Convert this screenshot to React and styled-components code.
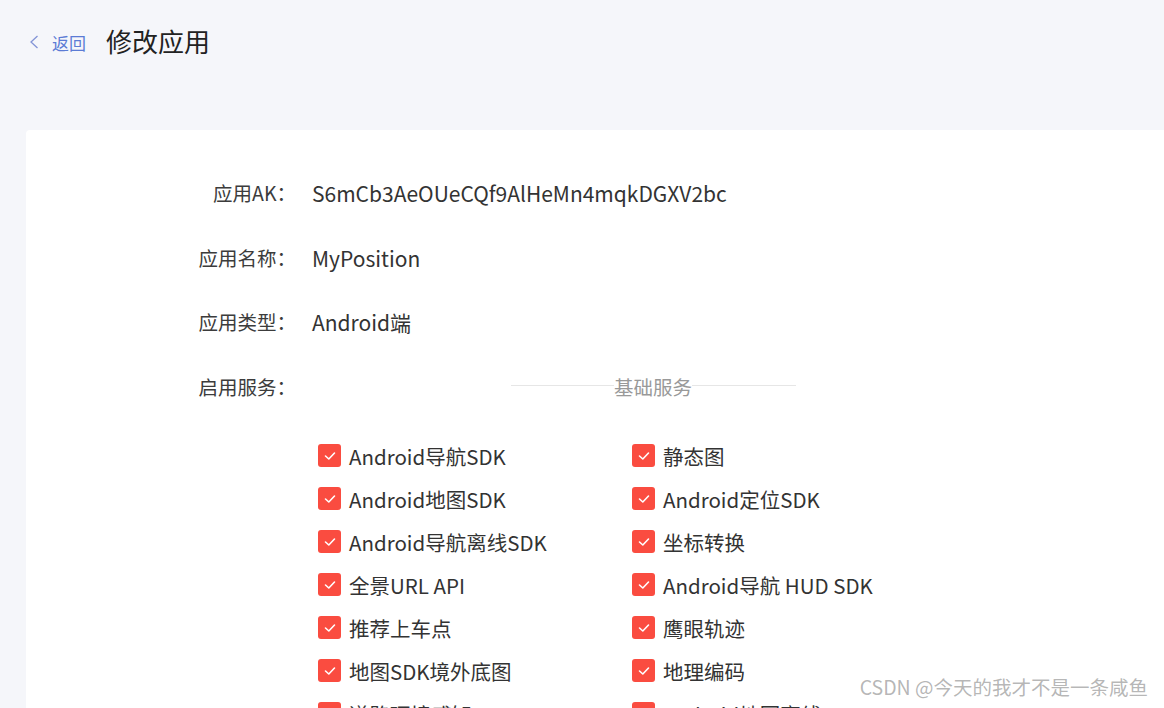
import React from 'react';
import styled, { createGlobalStyle } from 'styled-components';

const GlobalStyle = createGlobalStyle`
  html, body {
    margin: 0;
    padding: 0;
    background: #f5f6fa;
    font-family: "Noto Sans CJK SC", "Noto Sans", sans-serif;
    color: #333;
  }
`;

const Page = styled.div`
  position: relative;
  height: 708px;
  overflow: hidden;
`;

const Header = styled.div`
  display: flex;
  align-items: center;
  height: 84px;
  padding-left: 29px;
`;

const Back = styled.a`
  display: flex;
  align-items: center;
  gap: 13px;
  color: #5b7bd5;
  font-size: 17px;
  cursor: pointer;
  margin-right: 20px;
`;

const Title = styled.h1`
  margin: 0 0 3px;
  font-size: 26px;
  font-weight: 400;
  color: #222;
`;

const Card = styled.div`
  background: #fff;
  margin: 46px 0 0 26px;
  padding-top: 31px;
  min-height: 600px;
  border-radius: 4px 0 0 0;
`;

const FormRow = styled.div`
  display: grid;
  grid-template-columns: 270px 1fr;
  column-gap: 16px;
  align-items: start;
`;

const Label = styled.div`
  text-align: right;
  font-size: 19.5px;
  line-height: 64.5px;
  color: #3c3c3c;
`;

const Value = styled.div`
  font-size: 21px;
  line-height: 64.5px;
  color: #333;
`;

const DividerWrap = styled.div`
  width: 682px;
  height: 64.5px;
  display: flex;
  align-items: center;
  justify-content: center;
`;

const Divider = styled.div`
  width: 285px;
  display: flex;
  align-items: center;
  color: #999;
  font-size: 19.5px;

  &::before,
  &::after {
    content: '';
    flex: 1;
    border-top: 1px solid #e6e6e6;
    margin-top: -2px;
  }
`;

const CheckGrid = styled.div`
  display: grid;
  grid-template-columns: 314px 314px;
  margin: 15px 0 0 6px;
`;

const CheckItem = styled.label`
  display: flex;
  align-items: center;
  gap: 8px;
  height: 43px;
  font-size: 20.5px;
  color: #333;
  white-space: nowrap;
`;

const Box = styled.span`
  width: 23px;
  height: 23px;
  border-radius: 3px;
  background: ${(p) => (p.checked ? '#fa4c40' : '#fff')};
  border: ${(p) => (p.checked ? 'none' : '1px solid #ccc')};
  display: flex;
  align-items: center;
  justify-content: center;
  flex: none;
`;

const Watermark = styled.div`
  position: absolute;
  right: 16px;
  bottom: 7px;
  font-size: 19.5px;
  color: rgba(120, 120, 120, 0.55);
  pointer-events: none;
`;

const services = [
  'Android导航SDK',
  '静态图',
  'Android地图SDK',
  'Android定位SDK',
  'Android导航离线SDK',
  '坐标转换',
  '全景URL API',
  'Android导航 HUD SDK',
  '推荐上车点',
  '鹰眼轨迹',
  '地图SDK境外底图',
  '地理编码',
  '道路环境感知',
  'Android地图离线SDK',
];

function Checkbox({ checked, children }) {
  return (
    <CheckItem>
      <Box checked={checked}>
        {checked && (
          <svg width="12" height="10" viewBox="0 0 12 10">
            <polyline
              points="1.5,5 4.8,8 10.5,2"
              fill="none"
              stroke="#fff"
              strokeWidth="1.6"
              strokeLinecap="round"
              strokeLinejoin="round"
            />
          </svg>
        )}
      </Box>
      {children}
    </CheckItem>
  );
}

export default function App() {
  return (
    <Page>
      <GlobalStyle />
      <Header>
        <Back>
          <svg width="10" height="14" viewBox="0 0 10 14">
            <polyline
              points="8.5,1 2,7 8.5,13"
              fill="none"
              stroke="#8394d6"
              strokeWidth="1.3"
            />
          </svg>
          返回
        </Back>
        <Title>修改应用</Title>
      </Header>
      <Card>
        <FormRow>
          <Label>应用AK：</Label>
          <Value>S6mCb3AeOUeCQf9AlHeMn4mqkDGXV2bc</Value>
        </FormRow>
        <FormRow>
          <Label>应用名称：</Label>
          <Value>MyPosition</Value>
        </FormRow>
        <FormRow>
          <Label>应用类型：</Label>
          <Value>Android端</Value>
        </FormRow>
        <FormRow>
          <Label>启用服务：</Label>
          <div>
            <DividerWrap>
              <Divider>基础服务</Divider>
            </DividerWrap>
            <CheckGrid>
              {services.map((s) => (
                <Checkbox key={s} checked>
                  {s}
                </Checkbox>
              ))}
            </CheckGrid>
          </div>
        </FormRow>
      </Card>
      <Watermark>CSDN @今天的我才不是一条咸鱼</Watermark>
    </Page>
  );
}
